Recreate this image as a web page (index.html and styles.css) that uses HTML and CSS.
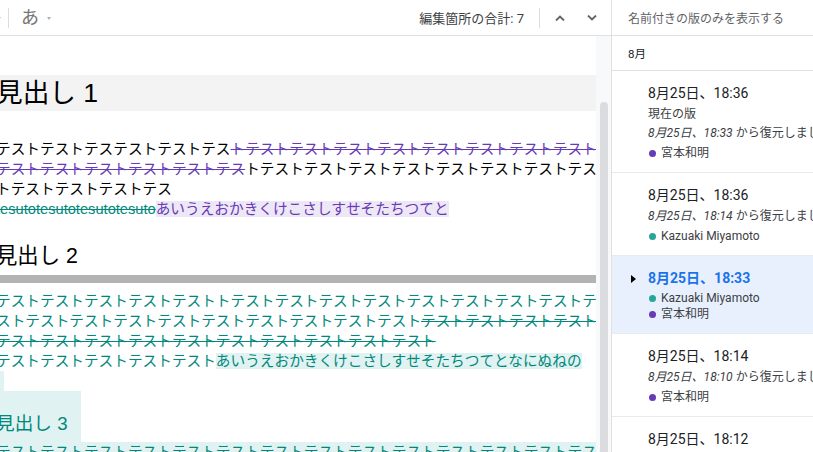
FILE: index.html
```html
<!DOCTYPE html>
<html lang="ja">
<head>
    <meta charset="UTF-8">
    <meta name="viewport" content="width=device-width, initial-scale=1.0">
    <title>版の比較</title>
    <link rel="stylesheet" href="styles.css">
</head>
<body>
    <div class="app">
        <div class="editor">
            <div class="toolbar">
                <span class="tb-caret tb-edge"></span>
                <span class="tb-sep"></span>
                <span class="tb-ime">あ</span>
                <span class="tb-caret"></span>
                <span class="tb-spacer"></span>
                <span class="tb-count">編集箇所の合計: 7</span>
                <span class="tb-sep tb-sep-right"></span>
                <button class="tb-nav" title="前の編集">
                    <svg width="10" height="6" viewBox="0 0 10 6"><polyline points="1,5.5 5,1.5 9,5.5" fill="none" stroke="#5f6368" stroke-width="1.8"/></svg>
                </button>
                <button class="tb-nav" title="次の編集">
                    <svg width="10" height="6" viewBox="0 0 10 6"><polyline points="1,0.5 5,4.5 9,0.5" fill="none" stroke="#5f6368" stroke-width="1.8"/></svg>
                </button>
            </div>

            <div class="doc-wrap">
                <div class="doc">
                    <div class="page">
                        <h1 class="h1">見出し 1</h1>

                        <p class="para">
                            テストテストテステストテストテス<span class="del-purple">トテストテストテストテストテストテストテストテスト</span><br>
                            <span class="del-purple">テストテストテストテストテストテス</span>トテストテストテストテストテストテストテストテス<br>
                            トテストテストテストテス<br>
                            <span class="del-teal">tesutotesutotesutotesuto</span><span class="ins-purple">あいうえおかきくけこさしすせそたちつてと</span>
                        </p>

                        <h2 class="h2">見出し 2</h2>
                        <div class="rule"></div>

                        <p class="para para-teal">
                            テストテストテストテストテストトテストテストテストテストテストテストテストテストテ<br>
                            ストテストテストテストテストテストテストテストテストテスト<span class="del-teal">テストテストテストテスト</span><br>
                            <span class="del-teal">テストテストテストテストテストテストテストテストテストテスト</span><br>
                            テストテストテストテストテスト<span class="ins-teal">あいうえおかきくけこさしすせそたちつてとなにぬねの</span>
                        </p>

                        <div class="empty-line"><span class="ins-mark"></span></div>
                        <h3 class="h3">見出し 3</h3>
                        <p class="para para-ins">テストテストテストテストテストテストテストテストテストテストテストテストテストテスト</p>
                    </div>
                </div>
                <div class="scrollbar"><div class="thumb"></div></div>
            </div>
        </div>

        <aside class="history">
            <div class="history-head">名前付きの版のみを表示する</div>
            <div class="month">8月</div>

            <div class="rev">
                <div class="rev-title">8月25日、18:36</div>
                <div class="rev-meta">
                    <div class="rev-line">現在の版</div>
                    <div class="rev-line"><i>8月25日、18:33</i> から復元しました</div>
                    <ul class="authors">
                        <li><span class="dot dot-purple"></span>宮本和明</li>
                    </ul>
                </div>
            </div>

            <div class="rev">
                <div class="rev-title">8月25日、18:36</div>
                <div class="rev-meta">
                    <div class="rev-line"><i>8月25日、18:14</i> から復元しました</div>
                    <ul class="authors">
                        <li><span class="dot dot-teal"></span>Kazuaki Miyamoto</li>
                    </ul>
                </div>
            </div>

            <div class="rev rev-selected">
                <span class="rev-arrow"></span>
                <div class="rev-title">8月25日、18:33</div>
                <div class="rev-meta">
                    <ul class="authors">
                        <li><span class="dot dot-teal"></span>Kazuaki Miyamoto</li>
                        <li><span class="dot dot-purple"></span>宮本和明</li>
                    </ul>
                </div>
            </div>

            <div class="rev">
                <div class="rev-title">8月25日、18:14</div>
                <div class="rev-meta">
                    <div class="rev-line"><i>8月25日、18:10</i> から復元しました</div>
                    <ul class="authors">
                        <li><span class="dot dot-purple"></span>宮本和明</li>
                    </ul>
                </div>
            </div>

            <div class="rev">
                <div class="rev-title">8月25日、18:12</div>
            </div>
        </aside>
    </div>
</body>
</html>
```

FILE: styles.css
```css
* {
    margin: 0;
    padding: 0;
    box-sizing: border-box;
}

body {
    font-family: Roboto, "Noto Sans CJK JP", sans-serif;
    color: #202124;
    background: white;
    overflow: hidden;
}

.app {
    display: flex;
    height: 452px;
    overflow: hidden;
}

/* editor side */

.editor {
    width: 611px;
    display: flex;
    flex-direction: column;
}

.toolbar {
    height: 36px;
    flex-shrink: 0;
    border-bottom: 1px solid #e0e0e0;
    display: flex;
    align-items: center;
    padding-right: 3px;
}

.tb-caret {
    width: 0;
    height: 0;
    border-left: 2.5px solid transparent;
    border-right: 2.5px solid transparent;
    border-top: 3px solid #b0b0b0;
    margin-left: 8px;
    margin-top: 1px;
}

.tb-edge {
    margin-left: -3px;
    margin-right: 7px;
}

.tb-sep {
    width: 1px;
    height: 20px;
    background: #dadce0;
    margin-right: 12px;
}

.tb-ime {
    font-size: 18px;
    line-height: 20px;
    color: #757575;
}

.tb-spacer {
    flex: 1;
}

.tb-count {
    font-size: 13px;
    color: #3c4043;
    margin-right: 15px;
}

.tb-sep-right {
    margin-right: 4px;
}

.tb-nav {
    width: 32px;
    height: 28px;
    border: none;
    background: none;
    display: flex;
    align-items: center;
    justify-content: center;
}

.doc-wrap {
    flex: 1;
    display: flex;
    min-height: 0;
    overflow: hidden;
}

.doc {
    flex: 1;
    overflow: hidden;
}

.page {
    margin-left: -4px;
    padding-top: 39px;
    font-family: "Liberation Sans", "Noto Sans CJK JP", sans-serif;
    font-size: 14.67px;
    line-height: 20px;
    color: #000;
    white-space: nowrap;
}

.h1 {
    height: 36px;
    line-height: 36px;
    font-size: 26.67px;
    font-weight: normal;
    background: #f3f3f3;
}

.para {
    margin-top: 28px;
}

.h2 {
    margin-top: 24px;
    line-height: 26px;
    font-size: 21.33px;
    font-weight: normal;
}

.rule {
    margin-top: 6px;
    height: 8px;
    background: #b3b3b3;
}

.para-teal {
    margin-top: 8px;
    color: #00897b;
}

.del-purple {
    color: #673ab7;
    text-decoration: line-through;
}

.ins-purple {
    color: #673ab7;
    background: #ede7f6;
}

.del-teal {
    color: #00897b;
    text-decoration: line-through;
}

.ins-teal {
    background: #e0f2f1;
}

.empty-line {
    height: 20px;
}

.ins-mark {
    display: inline-block;
    width: 8px;
    height: 20px;
    background: #e0f2f1;
}

.h3 {
    width: 85px;
    height: 51px;
    padding-top: 21px;
    line-height: 24px;
    font-size: 18.67px;
    font-weight: normal;
    color: #00897b;
    background: #e0f2f1;
}

.para-ins {
    margin-top: 0;
    color: #00897b;
    background: #e0f2f1;
}

.scrollbar {
    width: 15px;
    background: #f8f9fa;
    padding-left: 4px;
    overflow: hidden;
}

.thumb {
    margin-top: 66px;
    width: 8px;
    height: 360px;
    border-radius: 4px;
    background: #dadce0;
}

/* version history panel */

.history {
    flex: 1;
    border-left: 1px solid #e0e0e0;
    overflow: hidden;
    white-space: nowrap;
}

.history-head {
    height: 36px;
    border-bottom: 1px solid #e0e0e0;
    padding-left: 16px;
    display: flex;
    align-items: center;
    font-size: 12px;
    color: #5f6368;
}

.month {
    height: 35px;
    border-bottom: 1px solid #e0e0e0;
    padding-left: 16px;
    display: flex;
    align-items: center;
    font-size: 11.5px;
    color: #202124;
}

.rev {
    position: relative;
    padding: 12px 0 11px 36px;
    border-bottom: 1px solid #e8eaed;
}

.rev-title {
    font-size: 14px;
    line-height: 20px;
    color: #202124;
}

.rev-meta {
    margin-top: 2px;
    font-size: 12px;
    color: #3c4043;
}

.rev-line {
    line-height: 19px;
}

.authors {
    list-style: none;
    margin-top: 2px;
}

.authors li {
    display: flex;
    align-items: center;
    line-height: 16px;
}

.dot {
    width: 7px;
    height: 7px;
    border-radius: 50%;
    margin-left: 1px;
    margin-right: 5px;
}

.dot-purple {
    background: #673ab7;
}

.dot-teal {
    background: #26a69a;
}

.rev-selected {
    background: #e8f0fe;
}

.rev-selected .rev-title {
    color: #1a73e8;
    font-weight: bold;
}

.rev-arrow {
    position: absolute;
    left: 19px;
    top: 19px;
    width: 0;
    height: 0;
    border-left: 5px solid #000;
    border-top: 4.5px solid transparent;
    border-bottom: 4.5px solid transparent;
}
```
